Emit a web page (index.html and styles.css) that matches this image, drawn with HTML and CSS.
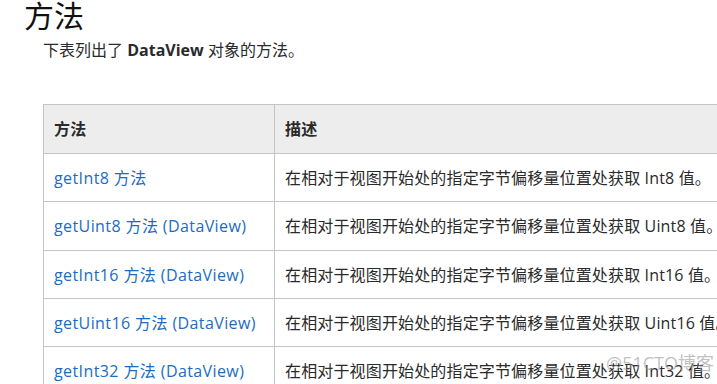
FILE: index.html
```html
<!DOCTYPE html>
<html lang="zh-CN">
<head>
    <meta charset="UTF-8">
    <meta name="viewport" content="width=device-width, initial-scale=1.0">
    <title>DataView 对象的方法</title>
    <link rel="stylesheet" href="styles.css">
</head>
<body>
    <div class="page">
        <h1>方法</h1>
        <div class="section">
            <p class="intro">下表列出了 <strong>DataView</strong> 对象的方法。</p>

            <table class="methods">
                <thead>
                    <tr>
                        <th class="col-name">方法</th>
                        <th>描述</th>
                    </tr>
                </thead>
                <tbody>
                    <tr>
                        <td><a href="#">getInt8 方法</a></td>
                        <td>在相对于视图开始处的指定字节偏移量位置处获取 Int8 值。</td>
                    </tr>
                    <tr>
                        <td><a href="#">getUint8 方法 (DataView)</a></td>
                        <td>在相对于视图开始处的指定字节偏移量位置处获取 Uint8 值。</td>
                    </tr>
                    <tr>
                        <td><a href="#">getInt16 方法 (DataView)</a></td>
                        <td>在相对于视图开始处的指定字节偏移量位置处获取 Int16 值。</td>
                    </tr>
                    <tr>
                        <td><a href="#">getUint16 方法 (DataView)</a></td>
                        <td>在相对于视图开始处的指定字节偏移量位置处获取 Uint16 值。</td>
                    </tr>
                    <tr>
                        <td><a href="#">getInt32 方法 (DataView)</a></td>
                        <td>在相对于视图开始处的指定字节偏移量位置处获取 Int32 值。</td>
                    </tr>
                </tbody>
            </table>
        </div>
    </div>

    <div class="watermark">@51CTO博客</div>
</body>
</html>
```

FILE: styles.css
```css
html {
    overflow: hidden;
}

body {
    font-family: "Open Sans", "Noto Sans CJK SC", sans-serif;
    margin: 0;
    color: #2a2a2a;
    background: #fff;
    font-size: 16px;
}

.page {
    padding-left: 24px;
}

h1 {
    margin: -4px 0 0 0;
    font-size: 30px;
    font-weight: 400;
    line-height: 40px;
    color: #111;
}

.section {
    padding-left: 19px;
}

.intro {
    margin: 0;
    padding-top: 2px;
    line-height: 24px;
    font-size: 16px;
}

.intro strong {
    font-weight: 700;
}

.methods {
    margin-top: 42px;
    width: 780px;
    border-collapse: collapse;
    font-size: 16px;
}

.methods th,
.methods td {
    border: 1px solid #c4c4c4;
    padding: 12px 10px;
    line-height: 23.3px;
    text-align: left;
    white-space: nowrap;
    letter-spacing: 0.15px;
}

.methods td {
    padding-top: 13px;
    padding-bottom: 11px;
}

.methods th {
    background: #ededed;
    font-weight: 700;
    line-height: 24px;
}

.methods .col-name {
    width: 210px;
}

.methods a {
    color: #1a6cc4;
    text-decoration: none;
    letter-spacing: 0.4px;
}

.watermark {
    position: absolute;
    right: 3px;
    bottom: 9px;
    font-size: 18px;
    color: rgba(150, 150, 150, 0.6);
}
```
